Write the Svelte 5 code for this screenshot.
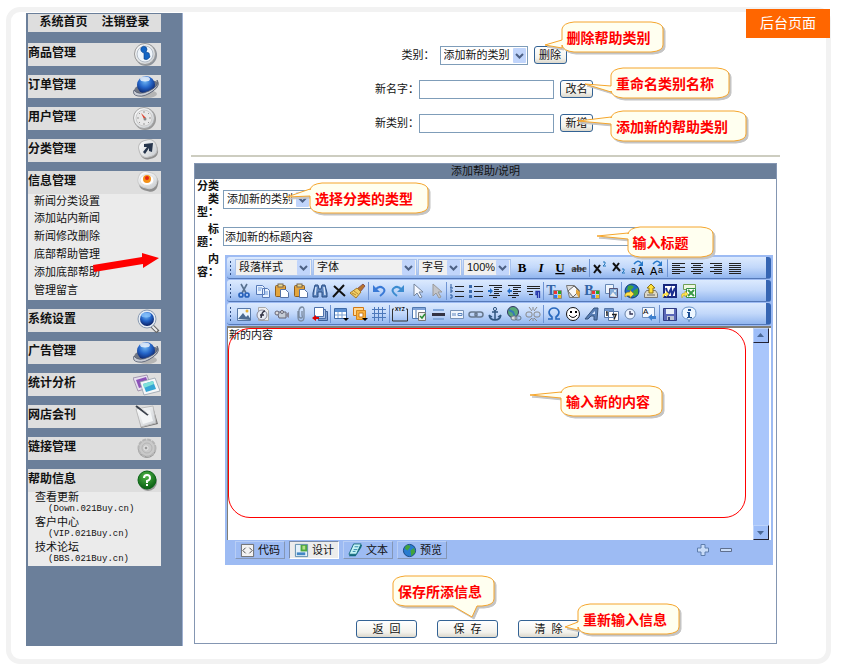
<script>
  let category = "添加新的类别";
  let type = "添加新的类别";
  let title = "添加新的标题内容";
  let content = "新的内容";
  let mode = "设计";

  const planet =
    '<ellipse cx="14" cy="19" rx="10" ry="4" fill="#999" opacity=".6"/><ellipse cx="13" cy="13" rx="13" ry="6" transform="rotate(-20 13 13)" fill="#707684"/><circle cx="13" cy="10" r="9" fill="url(#blue)"/><path d="M1 15Q5 21 16 16T24 5Q28 10 20 16T5 21Q-1 20 1 15Z" fill="#c8ccd4" stroke="#535c70" stroke-width=".8"/><ellipse cx="12" cy="4" rx="5" ry="2.500" fill="#fff" opacity=".75"/>';

  /* SIDEBAR SECTIONS WITH THEIR 28x24 ICONS */
  const sections = [
    {
      name: "商品管理",
      icon: '<circle cx="13" cy="12" r="11" fill="#8d939b"/><circle cx="12" cy="11" r="10.500" fill="url(#silver)" stroke="#999"/><circle cx="12" cy="11" r="8" fill="#eef4fa" stroke="#b4bcc6"/><path d="M8 5Q10 2 13 4Q15 6 13 9L16 10 17 14Q14 18 11 16L11 10Q7 9 8 5Z" fill="#1465c4" stroke="#073e86" stroke-width=".6"/>',
    },
    { name: "订单管理", icon: planet },
    {
      name: "用户管理",
      icon: '<circle cx="12" cy="12" r="11" fill="#999"/><circle cx="11" cy="11" r="10.500" fill="url(#silver)" stroke="#a5a5a5"/><circle cx="11" cy="11" r="8" fill="#e8e8e8" stroke="#ccc"/><path d="M11 4v2M11 16v2M4 11h2M16 11h2M6 6l1 1M16 6l-1 1M6 16l1-1M16 16l-1-1" stroke="#999"/><path d="M8 6l3 6 2-1z" fill="#e13a24"/><circle cx="12" cy="12" r="1.500" fill="#888"/>',
    },
    {
      name: "分类管理",
      icon: '<rect x="7" y="3" width="18" height="17" rx="7" transform="rotate(-14 16 12)" fill="#8f8f8f"/><rect x="6" y="1" width="18" height="17" rx="7" transform="rotate(-14 15 10)" fill="url(#silver)" stroke="#bbb"/><path d="M11 5L20 4 19 13 16 12 16 9 12 15 10 13 14 8H11Z" fill="#27364d"/>',
    },
    {
      name: "信息管理",
      icon: '<rect x="6" y="3" width="19" height="17" rx="7" transform="rotate(14 15 12)" fill="#8f8f8f"/><rect x="5" y="1" width="19" height="16" rx="7" transform="rotate(14 14 9)" fill="url(#silver)" stroke="#ccc"/><ellipse cx="14" cy="9" rx="7" ry="5.500" fill="#fff" stroke="#ddd"/><circle cx="14" cy="8" r="4" fill="#f49118"/><circle cx="14" cy="7" r="2" fill="#e32515"/>',
      links: [
        "新闻分类设置",
        "添加站内新闻",
        "新闻修改删除",
        "底部帮助管理",
        "添加底部帮助",
        "管理留言",
      ],
    },
    {
      name: "系统设置",
      icon: '<path d="M18 16l7 7" stroke="#666" stroke-width="4"/><path d="M18 16l6 6" stroke="#eee" stroke-width="2"/><circle cx="14" cy="10" r="9" fill="#e6edf5" stroke="#8a9bb2"/><circle cx="14" cy="10" r="7" fill="url(#blue)"/><ellipse cx="13" cy="6" rx="5" ry="2.500" fill="#8fc8ff" opacity=".7"/>',
    },
    { name: "广告管理", icon: planet },
    {
      name: "统计分析",
      icon: '<path d="M0 5L14 2 18 14 5 18Z" fill="#e7dff0" stroke="#877897" stroke-width=".7"/><path d="M3 7L13 4 16 12 6 15Z" fill="#8c52b8"/><path d="M7 9L22 5 27 18 11 22Z" fill="#f5f7f9" stroke="#8996a4" stroke-width=".7"/><path d="M10 11L20 8 23 16 13 19Z" fill="#35a6d5"/><path d="M10 11L20 8 21 11 11 15Z" fill="#7fe1d8"/>',
    },
    {
      name: "网店会刊",
      icon: '<path d="M4 5L20 2 25 19 8 23Z" fill="#777"/><path d="M3 4L20 1 23 18 8 22Z" fill="url(#silver)" stroke="#bbb"/><path d="M6 7l11-2 3 11-10 3z" fill="#f3f5f6"/><path d="M3 1l12 9" stroke="#39404b" stroke-width="2"/><path d="M6 1l9 8" stroke="#ddd"/>',
    },
    {
      name: "链接管理",
      icon: '<circle cx="14" cy="12" r="9" fill="#8f8f8f"/><circle cx="14" cy="11" r="8.500" fill="#c9c9c9" stroke="#b5b5b5" stroke-width="2" stroke-dasharray="4 1"/><circle cx="14" cy="11" r="5" fill="none" stroke="#b5b5b5"/><circle cx="13" cy="11" r="2" fill="#999" stroke="#eee"/>',
    },
  ];

  const helpLinks = [
    { name: "查看更新", host: "(Down.021Buy.cn)" },
    { name: "客户中心", host: "(VIP.021Buy.cn)" },
    { name: "技术论坛", host: "(BBS.021Buy.cn)" },
  ];

  const glyph = (s, style = "", x = 8, size = 13) =>
    `<text x="${x}" y="12" text-anchor="middle" font-family="Liberation Serif, serif" font-weight="bold" font-size="${size}" ${style}>${s}</text>`;
  const bars = (list) =>
    `<path d="${list.map(([x, y, w]) => `M${x} ${y}.5h${w}`).join("")}" stroke="#222" stroke-width="1"/>`;
  const paste =
    '<rect x="1.500" y="2.500" width="10" height="11" rx="1" fill="#e3a53d" stroke="#8b5e20"/><rect x="4" y="1" width="5" height="3" fill="#e9d98f" stroke="#765"/><path d="M6.500 6.500h5l3 3v5h-8z" fill="#fff" stroke="#5672a5"/>';
  const palette =
    '<path d="M8 8h3v3H8z" fill="#e33"/><path d="M12 8h3v3h-3z" fill="#2a2"/><path d="M8 12h3v3H8z" fill="#37e"/><path d="M12 12h3v3h-3z" fill="#eb2"/><path d="M7.500 7.500h8v8h-8z" fill="none" stroke="#888"/>';
  const globe =
    '<circle cx="8" cy="8" r="6.500" fill="#287bd0" stroke="#16457f"/><path d="M4 3q4-2 5 1L6 8 3 6zM9 8l4-3 1 5-4 4z" fill="#42a33b"/>';
  const caseArrow =
    '<path d="M4 4Q8-1 11 3" fill="none" stroke="#2778c8" stroke-width="1.500"/><path d="M13 1v5H8z" fill="#2778c8"/>';

  /* EDITOR BUTTONS: ROWS OF GROUPS, A RULE BETWEEN TWO GROUPS */
  const textTools = [
    [
      ["粗体", glyph("B")],
      ["斜体", glyph("I", 'font-style="italic"')],
      ["下划线", glyph("U", 'text-decoration="underline"')],
      ["删除线", glyph("abc", 'text-decoration="line-through" fill="#333"', 8, 10)],
    ],
    [
      ["上标", '<path d="M2 5l7 8M8 5l-6 8" stroke="#111" stroke-width="2"/><path d="M11 2h2v2l-2 2h3" stroke="#27b" fill="none"/>'],
      ["下标", '<path d="M2 3l7 8M8 3l-6 8" stroke="#111" stroke-width="2"/><path d="M11 9h2v2l-2 2h3" stroke="#27b" fill="none"/>'],
      ["大写", caseArrow + '<text x="1" y="13" font-size="9" font-family="Liberation Sans">a</text><text x="7" y="15" font-size="11" font-family="Liberation Sans">A</text>'],
      ["小写", caseArrow + '<text x="1" y="15" font-size="11" font-family="Liberation Sans">A</text><text x="9" y="13" font-size="9" font-family="Liberation Sans">a</text>'],
    ],
    [
      ["左对齐", bars([[2, 3, 13], [2, 5, 8], [2, 7, 13], [2, 9, 8], [2, 11, 13], [2, 13, 8]])],
      ["居中", bars([[2, 3, 12], [4, 5, 8], [2, 7, 12], [4, 9, 8], [2, 11, 12], [4, 13, 8]])],
      ["右对齐", bars([[2, 3, 12], [6, 5, 8], [2, 7, 12], [6, 9, 8], [2, 11, 12], [6, 13, 8]])],
      ["两端对齐", bars([[2, 3, 12], [2, 5, 12], [2, 7, 12], [2, 9, 12], [2, 11, 12], [2, 13, 12]])],
    ],
  ];

  const editTools = [
    [
      ["剪切", '<path d="M5 1l5 9M11 1L6 10" stroke="#58718f" stroke-width="1.600"/><circle cx="5" cy="12" r="2" fill="none" stroke="#2761ba" stroke-width="1.700"/><circle cx="11" cy="12" r="2" fill="none" stroke="#2761ba" stroke-width="1.700"/>'],
      ["复制", '<path d="M1.500 2.500h6l2 2v7h-8zM7.500 5.500h5l2 2v7h-7z" fill="#e8f2ff" stroke="#5679b6"/><path d="M3 5h4M3 7h3M9 9h4M9 11h4" stroke="#6f9bdb"/>'],
      ["粘贴", paste],
      ["粘贴文本", paste],
      ["查找", '<path d="M3 2h3l1 4h2l1-4h3l2 8v4h-5V9H6v5H1v-4z" fill="#5d84bc" stroke="#284c83"/><path d="M4 4l-1 8M12 4l1 8" stroke="#d8e6fa" stroke-width="1.500"/>'],
      ["删除", '<path d="M3 3l11 10M13 2L2 14" stroke="#111" stroke-width="2"/>'],
      ["清除格式", '<path d="M13 1l2 2-5 6-3-3z" fill="#b8742c" stroke="#855"/><path d="M7 5l4 4-5 6-6-5z" fill="#f1cf68" stroke="#a6792b"/><path d="M2 10l4 2M4 8l4 3" stroke="#b68a30"/>'],
    ],
    [
      ["撤消", '<path d="M4 7Q8 2 12 5T9 13" fill="none" stroke="#3979d6" stroke-width="2"/><path d="M2 2v7h7z" fill="#3979d6"/>'],
      ["重做", '<path d="M12 7Q8 2 4 5T7 13" fill="none" stroke="#3c8cd0" stroke-width="2"/><path d="M14 2v7H7z" fill="#3c8cd0"/>'],
      ["选择", '<path d="M5 1v12l3-3 3 5 2-1-3-5h4z" fill="#f5f8ff" stroke="#75849b"/>'],
      ["取消选择", '<path d="M5 1v12l3-3 3 5 2-1-3-5h4z" fill="#c4c5c9" stroke="#999"/>'],
    ],
    [
      ["编号", bars([[6, 3, 9], [6, 8, 9], [6, 13, 9]]) + '<path d="M2 1v4M1 5h3M1 7h2v2H1M1 12h2v3H1" fill="none" stroke="#27579b"/>'],
      ["项目符号", bars([[6, 3, 9], [6, 8, 9], [6, 13, 9]]) + '<path d="M1 2h3v3H1zM1 7h3v3H1zM1 12h3v3H1z" fill="#3867aa"/>'],
      ["增加缩进", bars([[2, 2, 13], [7, 4, 8], [7, 6, 5], [7, 8, 8], [7, 10, 5], [2, 12, 11], [6, 14, 4]]) + '<path d="M1 7h2V5l3 3-3 3V9H1z" fill="#246dc6"/>'],
      ["减少缩进", bars([[2, 2, 13], [7, 4, 8], [7, 6, 5], [7, 8, 8], [7, 10, 5], [2, 12, 11], [6, 14, 4]]) + '<path d="M6 7H4V5L1 8l3 3V9h2z" fill="#246dc6"/>'],
      ["段落", bars([[2, 3, 13], [2, 5, 13], [2, 8, 6], [4, 11, 4]]) + '<path d="M15 8.500h-4v3h2M12.500 8v7M14.500 8v7" fill="none" stroke="#2233aa" stroke-width="1.300"/>'],
    ],
    [
      ["文字颜色", glyph("T", 'fill="#3263a5"', 5, 14) + palette],
      ["填充", '<path d="M1.500 2.500h8l5 5v7h-10z" fill="#ddd" stroke="#777"/><path d="M3 8l6-5 5 5-6 6z" fill="#f7f7f7" stroke="#666"/><path d="M11 6l4 3-1 6-3-5z" fill="#e2a63c"/>'],
      ["背景颜色", glyph("B", 'fill="#3263a5"', 5, 14) + palette],
      ["背景图片", '<path d="M2.500 1.500h8v9h-8z" fill="#eef5fc" stroke="#6688b5"/><path d="M6.500 5.500h8v9h-8z" fill="#86add8" stroke="#557"/><path d="M7 13l3-4 4 5" fill="#eee"/><circle cx="12" cy="8" r="1" fill="#fff"/>'],
    ],
    [
      ["网页", '<circle cx="8" cy="8" r="7" fill="#1f6cc4" stroke="#0b3c74"/><path d="M4 3q4-2 6 1L7 7 3 7zM9 8l5-3v6l-4 3z" fill="#42a33b"/><path d="M1 14Q0 9 6 9V7l4 4-4 4v-2Q3 12 1 14Z" fill="#ffe24a" stroke="#9a7913" stroke-width=".6"/>'],
      ["上传", '<path d="M1.500 10.500l2-3h9l2 3v4h-13z" fill="#ddd9c8" stroke="#777"/><path d="M8 1l4 4h-2v5H6V5H4z" fill="#ffe03b" stroke="#8e7414"/><path d="M4 12h8" stroke="#666"/>'],
      ["Word", '<path d="M2 2h12v12H2z" fill="#fff" stroke="#17277e" stroke-width="2"/><path d="M4 5l2 7 3-6 1 6 3-7" fill="none" stroke="#1b2e91" stroke-width="2"/><path d="M1 15Q-1 10 4 10V8l3 3-3 3v-2Q2 12 1 15Z" fill="#ffe24a"/>'],
      ["Excel", '<path d="M2.500 1.500h12v5h-12z" fill="#eef6e0" stroke="#6f9f56"/><path d="M5.500 5.500h9v9h-9z" fill="#fff" stroke="#369145"/><path d="M7 7l6 6M13 7l-6 6" stroke="#3b9b47" stroke-width="2"/><path d="M1 15Q-1 10 4 10V8l3 3-3 3v-2Q2 12 1 15Z" fill="#ffe24a" stroke="#b79a20" stroke-width=".5"/>'],
    ],
  ];

  const insertTools = [
    [
      ["图片", '<path d="M1.500 2.500h13v12h-13z" fill="#e9f4ff" stroke="#5778a8"/><path d="M2 13l5-6 3 4 2-2 3 5z" fill="#4b6b91"/><circle cx="11" cy="5" r="1.500" fill="#e4b037"/>'],
      ["Flash", '<path d="M3.500 1.500h7l3 3v10h-10z" fill="#eee" stroke="#aaa"/><circle cx="7" cy="9" r="5" fill="#e8ecf4" stroke="#889"/><path d="M10 5Q7 5 6 12M5 9h4" fill="none" stroke="#334" stroke-width="1.500"/>'],
      ["视频", '<path d="M3 6h9v6H5z" fill="#c4ccd6" stroke="#667"/><path d="M12 8l3-2v6l-3-2z" fill="#889"/><circle cx="3" cy="7" r="2" fill="#ddd" stroke="#667"/><circle cx="8" cy="6" r="1.500" fill="#ddd" stroke="#667"/>'],
      ["附件", '<path d="M5 5v6q0 4 3 4t3-4V4q0-3-2-3T6 4v6q0 2 2 2t1-3V5" fill="none" stroke="#7a8aa0" stroke-width="1.300"/>'],
      ["图层", '<path d="M6.500 5.500h9v9h-9z" fill="#7f9fcf" stroke="#3d5f97"/><path d="M4.500 3.500h9v9h-9z" fill="#adc4e7" stroke="#4b6fa9"/><path d="M2.500 1.500h9v9h-9z" fill="#fff" stroke="#4b6fa9"/><path d="M0 12l4-3v2h3v2H4v2z" fill="#d00"/>'],
    ],
    [
      ["表格", '<path d="M1.500 2.500h12v10h-12z" fill="#fff" stroke="#3e6aa8"/><path d="M2 3h11v3H2z" fill="#5c8fd2"/><path d="M2 9h11M5 6v6M9 6v6" stroke="#7aa0d4"/><path d="M10 12h6l-3 3z"/>'],
      ["单元格", '<path d="M1.500 1.500h10v8h-10z" fill="#ffd895" stroke="#d27713"/><path d="M4.500 4.500h9v9h-9z" fill="#fbb13c" stroke="#d2861f"/><path d="M7 7h4v4H7z" fill="#fff" stroke="#c67b1e"/><path d="M10 12h6l-3 3z"/>'],
      ["网格", '<path d="M1 3.500h14M1 7.500h14M1 11.500h14M3.500 1v14M7.500 1v14M11.500 1v14" stroke="#4c78bb"/>'],
    ],
    [
      ["选框", '<path d="M2 3H.500v12h15V3H14" fill="none" stroke="#333"/><text x="3" y="5" font-size="5" font-family="Liberation Sans" font-weight="bold">XYZ</text>'],
      ["表单", '<path d="M1.500 1.500h13v11h-13z" fill="#fff" stroke="#5179b0"/><path d="M2 2h12v2H2z" fill="#7fa3d8"/><path d="M5 4v8" stroke="#5179b0"/><path d="M7.500 6.500h7v8h-7z" fill="#eee" stroke="#777"/><path d="M9 10l2 2 3-4" fill="none" stroke="#278c32" stroke-width="1.500"/>'],
      ["水平线", '<path d="M3 3h11v2H3zM3 12h11v2H3z" fill="#82a8dc"/><path d="M2 7h13v3H2z" fill="#334"/>'],
      ["字段", '<path d="M1.500 4.500h13v8h-13z" fill="#f0f5fd" stroke="#7892b7"/><path d="M4 7v3M6 7v3M9 7.500h4v2H9z" stroke="#5c85bf" fill="none"/>'],
      ["链接", '<rect x="1" y="6" width="8" height="5" rx="2.500" fill="none" stroke="#68798f" stroke-width="1.500"/><rect x="7" y="6" width="8" height="5" rx="2.500" fill="none" stroke="#68798f" stroke-width="1.500"/>'],
      ["锚点", '<circle cx="8" cy="3" r="1.600" fill="none" stroke="#315680"/><path d="M8 5v9M5 6h6M2 9Q3 14 8 14T14 9M2 9l3 2M14 9l-3 2" fill="none" stroke="#315680" stroke-width="1.500"/>'],
      ["图片地图", '<circle cx="7" cy="6" r="5.500" fill="#57a978" stroke="#336"/><path d="M3 4l4 2 2 5" stroke="#3579b5" stroke-width="2" fill="none"/><rect x="5" y="10" width="6" height="4" rx="2" fill="#ddd" stroke="#678"/><rect x="9" y="10" width="6" height="4" rx="2" fill="none" stroke="#678"/>'],
      ["取消链接", '<rect x="1" y="6" width="6" height="5" rx="2" fill="none" stroke="#888"/><rect x="9" y="6" width="6" height="5" rx="2" fill="none" stroke="#888"/><path d="M4 1l3 4M12 1L9 5M4 15l3-3M12 15l-3-3M8 1v3M8 12v3" stroke="#888"/>'],
    ],
    [
      ["特殊字符", '<path d="M2 13h4v-2Q3 9 3 6Q4 2 8 2t5 4q0 3-3 5v2h4" fill="none" stroke="#2868bd" stroke-width="1.600"/>'],
      ["表情", '<circle cx="8" cy="8" r="6.500" fill="#fff" stroke="#111"/><path d="M4 9Q8 14 12 9" fill="none" stroke="#111"/><path d="M5 5h2v2H5zM10 5h2v2h-2z"/>'],
      ["艺术字", '<path d="M1 13L10 2h4l-1 12h-3v-4H7l-3 3z" fill="#587eb4" stroke="#37547d"/><path d="M8 8h3V5z" fill="#dceaff"/>'],
      ["日期", '<path d="M1.500 2.500h9v9h-9zM5.500 5.500h10v9h-10z" fill="#fff" stroke="#5676a6"/><path d="M2 3h8v2H2z" fill="#6c92ca"/><path d="M3 6h1v4M9 8.500h4l-2 5" fill="none" stroke="#222" stroke-width="1.500"/>'],
      ["时间", '<circle cx="8" cy="8" r="5" fill="#edf4ff" stroke="#6984aa"/><path d="M8 5v3h3" fill="none" stroke="#335" stroke-width="1.300"/>'],
      ["翻译", '<path d="M1.500 1.500h12v10h-12z" fill="#f5f9ff" stroke="#7191bd"/><text x="2" y="8" font-size="8" font-family="Liberation Sans">A</text><path d="M15 10h-4V8l-4 3 4 4v-2h4z" fill="#3d7fce"/>'],
    ],
    [
      ["保存", '<path d="M1.500 2.500h13v12h-13z" fill="#5b68b8" stroke="#303c83"/><path d="M4 3h8v5H4z" fill="#e8eff8"/><path d="M5 10h7v4H5z" fill="#bdc5d3"/><path d="M6 11h2v3H6z" fill="#33427c"/>'],
      ["关于", '<path d="M8 1Q15 1 15 7T9 13L8 16 7 13Q1 13 1 7T8 1Z" fill="#edf6ff" stroke="#6d96c9"/><path d="M7 3h3v2H7zM6 6h3v5h2v1H6v-1h1V7H6z" fill="#1d4e91"/>'],
    ],
  ];

  const modes = [
    ["代码", '<path d="M1.500 1.500h13v13h-13z" fill="#f2f2f2" stroke="#666"/><path d="M6 5L3 8l3 3M10 5l3 3-3 3" fill="none" stroke="#444"/>'],
    ["设计", '<path d="M1.500 1.500h13v13h-13z" fill="#e4f1fa" stroke="#5989ab"/><path d="M7 2h7v7H7z" fill="#4ea93f"/><path d="M3 10h9v3H3z" fill="#4387c5"/><path d="M9 3h3v4H9z" fill="#b7df8a"/>'],
    ["文本", '<path d="M6 2h9l-1 3-6 9H1z" fill="#136a7c"/><path d="M6 1h8l-5 11H1z" fill="#c5f4f5" stroke="#176c7f"/><path d="M7 4h4M6 7h4M5 9h3" stroke="#38a"/>'],
    ["预览", globe],
  ];

  /*
  OUTLINE OF A BALLOON, w x 30, WITH ITS TAIL
  ON THE LEFT OR BOTTOM SIDE
  */
  function balloon(w, tip, from, to, bottom) {
    const left = bottom ? "" : `L0 ${to}L${tip}L0 ${from}`;
    const low = bottom ? `H${to}L${tip}L${from} 30` : "";
    return `M12 0H${w - 12}Q${w} 1 ${w} 7V23Q${w} 29 ${w - 12} 30${low}H12Q1 29 0 23${left}V7Q1 1 12 0Z`;
  }
</script>

{#snippet callout(text, place, w, tip, from, to, bottom)}
  <span class="callout {place}">
    <svg width={w} height="30" aria-hidden="true">
      <path d={balloon(w, tip, from, to, bottom)} />
    </svg>
    <b>{text}</b>
  </span>
{/snippet}

{#snippet chevron()}
  <svg class="chevron" viewBox="0 0 13 15" aria-hidden="true">
    <rect width="13" height="15" rx="1" />
    <path d="M3 6l3.500 3.500L10 6" />
  </svg>
{/snippet}

{#snippet tools(groups)}
  {#each groups as group}
    <div class="group">
      {#each group as [name, icon]}
        <button type="button" class="tool" aria-label={name}>
          <svg viewBox="0 0 16 16">{@html icon}</svg>
        </button>
      {/each}
    </div>
  {/each}
{/snippet}

<div class="frame">
  <div class="badge">后台页面</div>

  <nav class="sidebar">
    <svg class="defs" aria-hidden="true">
      <defs>
        <radialGradient id="blue" cx="45%" cy="30%" r="70%">
          <stop offset="0" stop-color="#6eb5f4" />
          <stop offset=".5" stop-color="#2464c8" />
          <stop offset="1" stop-color="#0b1f63" />
        </radialGradient>
        <linearGradient id="silver" x2="1" y2="1">
          <stop offset="0" stop-color="#fff" />
          <stop offset="1" stop-color="#c8ccd0" />
        </linearGradient>
        <radialGradient id="green" cx="45%" cy="30%" r="70%">
          <stop offset="0" stop-color="#4fb545" />
          <stop offset="1" stop-color="#085e12" />
        </radialGradient>
      </defs>
    </svg>
    <div class="top-links">
      <a href="#home">系统首页</a>
      <a href="#logout">注销登录</a>
    </div>
    {#each sections as section}
      <section>
        <h2>
          {section.name}
          <svg viewBox="0 0 28 24" aria-hidden="true">{@html section.icon}</svg>
        </h2>
        {#if section.links}
          <ul class="links">
            {#each section.links as link}
              <li><a href="#info">{link}</a></li>
            {/each}
          </ul>
          <svg class="pointer" viewBox="0 0 68 22" aria-hidden="true">
            <path d="M1 13L50 5V1L67 6 51 16V12L2 20Z" />
          </svg>
        {/if}
      </section>
    {/each}
    <section>
      <h2>
        帮助信息
        <svg viewBox="0 0 28 24" aria-hidden="true">
          <circle cx="15" cy="13" r="9" fill="#999" />
          <circle cx="14" cy="11" r="9" fill="url(#green)" stroke="#0b6517" />
          <path d="M11 9Q11 6 14 6T17 9Q17 11 14 12V14M14 15v2" fill="none" stroke="#fff" stroke-width="2" />
        </svg>
      </h2>
      <ul class="help">
        {#each helpLinks as link}
          <li>
            <a href="#help">{link.name}</a>
            <span>{link.host}</span>
          </li>
        {/each}
      </ul>
    </section>
  </nav>

  <main>
    <form class="category">
      <div class="line">
        <label for="category">类别：</label>
        <span class="select wide">
          <select id="category" bind:value={category}>
            <option>添加新的类别</option>
          </select>
          {@render chevron()}
        </span>
        <span class="anchor">
          <button type="button" class="small">删除</button>
          {@render callout("删除帮助类别", "at-delete", 101, "-17 23", 18, 26)}
        </span>
      </div>
      <div class="line">
        <label for="rename">新名字：</label>
        <input id="rename" type="text" />
        <span class="anchor">
          <button type="button" class="small">改名</button>
          {@render callout("重命名类别名称", "at-rename", 118, "-26 16", 18, 24)}
        </span>
      </div>
      <div class="line">
        <label for="add">新类别：</label>
        <input id="add" type="text" />
        <span class="anchor">
          <button type="button" class="small">新增</button>
          {@render callout("添加新的帮助类别", "at-add", 135, "-33 10", 6, 13)}
        </span>
      </div>
    </form>

    <hr />

    <form class="panel">
      <h1>添加帮助/说明</h1>
      <div class="fields">
        <label for="type">分类<br />类<br />型：</label>
        <span class="anchor">
          <span class="select wide">
            <select id="type" bind:value={type}>
              <option>添加新的类别</option>
            </select>
            {@render chevron()}
          </span>
          {@render callout("选择分类的类型", "at-type", 118, "-23 14", 6, 13)}
        </span>

        <label for="title">标<br />题：</label>
        <span class="anchor title">
          <input id="title" type="text" bind:value={title} />
          {@render callout("输入标题", "at-title", 85, "-31 9", 6, 12)}
        </span>

        <label for="content">内<br />容：</label>
        <div class="editor">
          <div class="toolbar">
            <span class="select style">
              <select aria-label="段落样式"><option>段落样式</option></select>
              {@render chevron()}
            </span>
            <span class="select family">
              <select aria-label="字体"><option>字体</option></select>
              {@render chevron()}
            </span>
            <span class="select size">
              <select aria-label="字号"><option>字号</option></select>
              {@render chevron()}
            </span>
            <span class="select zoom">
              <select aria-label="显示比例"><option>100%</option></select>
              {@render chevron()}
            </span>
            {@render tools(textTools)}
          </div>
          <div class="toolbar">{@render tools(editTools)}</div>
          <div class="toolbar">{@render tools(insertTools)}</div>

          <div class="canvas">
            <textarea id="content" bind:value={content}></textarea>
            <div class="scroll">
              <button type="button" aria-label="向上滚动">
                <svg viewBox="0 0 13 13"><path d="M3 8l3.500-4L10 8z" /></svg>
              </button>
              <button type="button" aria-label="向下滚动">
                <svg viewBox="0 0 13 13"><path d="M3 5l3.500 4L10 5z" /></svg>
              </button>
            </div>
            <div class="outline"></div>
            {@render callout("输入新的内容", "at-content", 101, "-31 9", 6, 12)}
          </div>

          <div class="modes">
            {#each modes as [name, icon]}
              <button
                type="button"
                class="mode"
                class:active={mode === name}
                on:click={() => (mode = name)}
              >
                <svg viewBox="0 0 16 16" aria-hidden="true">{@html icon}</svg>
                {name}
              </button>
            {/each}
            <div class="resize">
              <button type="button" class="tool" aria-label="增大">
                <svg viewBox="0 0 16 16">
                  <path d="M6 2.500h4V6h3.500v4H10v3.500H6V10H2.500V6H6z" fill="#c9dcf8" stroke="#5f7fae" />
                </svg>
              </button>
              <button type="button" class="tool" aria-label="减小">
                <svg viewBox="0 0 16 16">
                  <path d="M2.500 6.500h11v3h-11z" fill="#c9dcf8" stroke="#5f6f8e" />
                </svg>
              </button>
            </div>
          </div>
        </div>
      </div>

      <div class="actions">
        <button type="button">返&nbsp; 回</button>
        <span class="anchor">
          <button type="button">保&nbsp; 存</button>
          {@render callout("保存所添信息", "at-save", 101, "79 41", 60, 84, true)}
        </span>
        <span class="anchor">
          <button type="button">清&nbsp; 除</button>
          {@render callout("重新输入信息", "at-clear", 101, "-13 23", 18, 26)}
        </span>
      </div>
    </form>
  </main>
</div>

<style>
  :global(body) {
    margin: 0;
    background: #fff;
  }
  .frame,
  button,
  input,
  select,
  textarea {
    font-family: "Liberation Sans", "Noto Sans CJK SC", sans-serif;
    font-size: 11px;
    color: #111;
  }
  .frame {
    position: relative;
    display: flex;
    margin: 7px 14px 7px 6px;
    padding: 1px 46px 13px 15px;
    border: 5px solid #f2f2f2;
    border-radius: 14px;
  }
  .frame,
  .frame * {
    box-sizing: border-box;
  }
  .badge {
    position: absolute;
    top: -3px;
    right: -4px;
    padding: 0 14px;
    background: #ff6600;
    color: #fff;
    font-size: 14px;
    line-height: 29px;
  }
  a {
    color: inherit;
    text-decoration: none;
  }
  button {
    padding: 0;
    white-space: nowrap;
  }
  ul {
    margin: 0;
    padding: 0;
    list-style: none;
  }

  .sidebar {
    flex: none;
    width: 157px;
    padding: 1px 21px 0 2px;
    background: #6b7f9a;
    border-right: 1px solid #9fb0d0;
  }
  .defs {
    position: absolute;
    width: 0;
    height: 0;
  }
  .top-links {
    display: flex;
    justify-content: center;
    gap: 14px;
    height: 18px;
    margin-bottom: 11px;
    background: #dedede;
    font-size: 12px;
    font-weight: bold;
    line-height: 16px;
  }
  section {
    position: relative;
    margin-bottom: 9px;
    background: #ebebeb;
  }
  h2 {
    display: flex;
    justify-content: space-between;
    height: 23px;
    margin: 0;
    background: #dedede;
    font-size: 12px;
    line-height: 21px;
  }
  h2 svg {
    width: 28px;
    height: 24px;
  }
  .links {
    height: 106px;
    padding-left: 6px;
    line-height: 18px;
  }
  .links li {
    height: 18px;
  }
  .links li:first-child {
    height: 15px;
    line-height: 14px;
  }
  .pointer {
    position: absolute;
    left: 64px;
    top: 81px;
    width: 68px;
    height: 22px;
    fill: #f00;
  }
  .help {
    height: 74px;
    padding-left: 7px;
    line-height: 10px;
  }
  .help a,
  .help span {
    display: block;
  }
  .help span {
    padding-left: 13px;
    font-family: "Liberation Mono", monospace;
    font-size: 9px;
    line-height: 15px;
  }

  main {
    flex: 1;
    min-width: 0;
    padding: 0 0 2px 8px;
  }
  .category {
    display: flex;
    flex-direction: column;
    gap: 14px;
    padding-top: 32px;
  }
  .line {
    display: flex;
    align-items: center;
    justify-content: center;
    height: 20px;
    padding-right: 3px;
  }
  .line label {
    line-height: 20px;
  }
  .line .select {
    margin-left: 5px;
  }
  .line input {
    width: 135px;
  }
  .line .anchor {
    margin-left: 6px;
  }
  .anchor {
    position: relative;
    display: flex;
    align-items: center;
  }
  input {
    height: 19px;
    padding: 0 1px;
    border: 1px solid #7f9db9;
    background: #fff;
  }
  .select {
    display: flex;
    align-items: center;
    height: 19px;
    padding-right: 1px;
    border: 1px solid #7f9db9;
    background: #fff;
  }
  .select select {
    flex: 1;
    min-width: 0;
    height: 17px;
    padding: 0 0 0 3px;
    border: 0;
    appearance: none;
    background: transparent;
    line-height: 15px;
  }
  .wide {
    width: 88px;
  }
  .chevron {
    flex: none;
    width: 13px;
    height: 15px;
    pointer-events: none;
  }
  .chevron rect {
    fill: #c1d5fb;
  }
  .chevron path {
    fill: none;
    stroke: #4d6185;
    stroke-width: 2;
  }
  .small,
  .actions button {
    height: 18px;
    border: 1px solid #336294;
    border-radius: 3px;
    background: linear-gradient(#fff, #f3f2ec 70%, #dcd8cc);
    line-height: 14px;
  }
  .small {
    width: 33px;
  }
  hr {
    height: 2px;
    margin: 22px 0 6px;
    border: 0;
    background: #cdcdc0;
  }

  .panel {
    margin: 0 3px;
    border: 1px solid #8496b2;
  }
  h1 {
    height: 15px;
    margin: 0;
    background: #6b7f9a;
    font-size: 11px;
    font-weight: normal;
    line-height: 14px;
    text-align: center;
  }
  .fields {
    display: grid;
    grid-template-columns: 24px minmax(0, 1fr);
    gap: 4px;
    padding: 1px 3px 0 0;
  }
  .fields label {
    font-weight: bold;
    line-height: 13px;
    text-align: right;
  }
  .title {
    width: 87%;
  }
  .title input {
    width: 100%;
  }

  .editor {
    display: flex;
    flex-direction: column;
    gap: 1px;
    margin: 2px 0 0 2px;
    padding: 2px 2px 0;
    background: #9dbbf3;
  }
  .toolbar {
    display: flex;
    align-items: center;
    height: 22px;
    padding-left: 7px;
    border-right: 5px solid #3565b3;
    border-bottom: 1px solid #5579b8;
    border-radius: 3px;
    background:
      radial-gradient(circle, #304f87 1px, transparent 1px) 2px 3px / 3px 4px no-repeat,
      radial-gradient(circle, #304f87 1px, transparent 1px) 2px 7px / 3px 4px no-repeat,
      radial-gradient(circle, #304f87 1px, transparent 1px) 2px 11px / 3px 4px no-repeat,
      radial-gradient(circle, #304f87 1px, transparent 1px) 2px 15px / 3px 4px no-repeat,
      linear-gradient(#dceafe, #c2d8fa 50%, #92b6ef);
  }
  .toolbar .select {
    flex: none;
    height: 17px;
    margin-right: 1px;
    border-color: #a9c2ec;
    background: #f0f0f0;
  }
  .toolbar .select select {
    height: 15px;
  }
  .style {
    width: 77px;
    margin-left: 1px;
  }
  .family {
    width: 104px;
  }
  .size {
    width: 44px;
  }
  .zoom {
    width: 48px;
  }
  .group {
    display: flex;
  }
  .group + .group {
    margin-left: 1px;
    border-left: 1px solid #6f94d3;
  }
  .tool {
    flex: none;
    width: 19px;
    height: 18px;
    border: 0;
    background: transparent;
  }
  .tool svg {
    display: block;
    width: 16px;
    height: 16px;
    margin: 0 auto;
  }
  .canvas {
    position: relative;
    display: flex;
    height: 214px;
    border-top: 2px solid #817f76;
    border-left: 1px solid #817f76;
    background: #fff;
  }
  textarea {
    flex: 1;
    padding: 0 1px;
    border: 0;
    resize: none;
    background: transparent;
    line-height: 14px;
  }
  .scroll {
    display: flex;
    flex-direction: column;
    justify-content: space-between;
    width: 16px;
    margin-right: 2px;
    background: #a9c6fb;
  }
  .scroll button {
    height: 15px;
    border: 1px solid #bcd3fb;
    border-right-color: #223;
    border-bottom-color: #223;
    background: #9dbdf8;
  }
  .scroll svg {
    display: block;
    width: 13px;
    height: 13px;
    fill: #4a6795;
  }
  .outline {
    position: absolute;
    inset: 0 25px 22px 0;
    border: 1px solid #f00;
    border-radius: 22px;
    pointer-events: none;
  }
  .modes {
    display: flex;
    gap: 4px;
    height: 24px;
    padding-left: 8px;
  }
  .mode {
    display: flex;
    align-items: center;
    justify-content: center;
    gap: 3px;
    width: 50px;
    height: 18px;
    border: 1px solid #b8cef5;
    border-right-color: #8496b5;
    border-bottom-color: #8496b5;
    background: transparent;
    line-height: 14px;
  }
  .mode.active {
    border-color: #7a8ba8 #fff #fff #7a8ba8;
    background: #ececec;
  }
  .mode svg {
    width: 15px;
    height: 15px;
  }
  .resize {
    display: flex;
    gap: 4px;
    margin-left: auto;
    padding-right: 36px;
  }

  .actions {
    display: flex;
    justify-content: center;
    gap: 20px;
    padding: 55px 36px 5px 0;
  }
  .actions button {
    width: 61px;
  }

  .callout {
    position: absolute;
    z-index: 2;
    display: grid;
    pointer-events: none;
  }
  .callout svg,
  .callout b {
    grid-area: 1 / 1;
  }
  .callout svg {
    overflow: visible;
    fill: #fffff0;
    stroke: #f5a52c;
    stroke-width: 1;
    filter: drop-shadow(2px 2px 0 #c4c4c4);
  }
  .callout b {
    position: relative;
    padding-left: 5px;
    color: #f00;
    font-size: 14px;
    line-height: 32px;
    white-space: nowrap;
  }
  .at-delete {
    left: 28px;
    top: -24px;
  }
  .at-rename {
    left: 51px;
    top: -12px;
  }
  .at-add {
    left: 51px;
    top: -3px;
  }
  .at-type {
    left: 87px;
    top: 3px;
  }
  .at-title {
    right: -11px;
    top: 4px;
  }
  .at-content {
    left: 333px;
    top: 58px;
  }
  .at-save {
    left: -44px;
    top: -44px;
  }
  .at-clear {
    left: 60px;
    top: -16px;
  }
</style>
